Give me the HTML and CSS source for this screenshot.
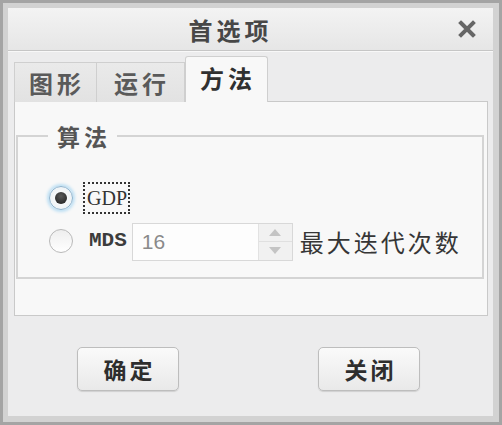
FILE: index.html
```html
<!DOCTYPE html>
<html lang="zh-CN">
<head>
<meta charset="utf-8">
<title>首选项</title>
<link rel="stylesheet" href="styles.css">
</head>
<body>
<div class="window">
  <div class="titlebar">
    <span></span>
    <span class="title">首选项</span>
    <span class="close">
      <svg width="18" height="18" viewBox="0 0 18 18"><path d="M3 3 L15 15 M15 3 L3 15" stroke="#666" stroke-width="4" stroke-linecap="square"/></svg>
    </span>
  </div>
  <div class="body">
    <div class="tabs">
      <div class="tab">图形</div>
      <div class="tab">运行</div>
      <div class="tab active">方法</div>
    </div>
    <div class="panel">
      <fieldset class="group">
        <legend>算法</legend>
        <div class="row">
          <span class="radio checked"><span class="dot"></span></span>
          <span class="opt focus">GDP</span>
        </div>
        <div class="row">
          <span class="radio"></span>
          <span class="opt mds">MDS</span>
          <span class="spin">
            <span class="spin-val">16</span>
            <span class="spin-btns">
              <span class="arr up"></span>
              <span class="arr down"></span>
            </span>
          </span>
          <span class="label">最大迭代次数</span>
        </div>
      </fieldset>
    </div>
    <div class="footer">
      <button class="btn">确定</button>
      <button class="btn">关闭</button>
    </div>
  </div>
</div>
</body>
</html>
```

FILE: styles.css
```css
html, body {
  margin: 0;
  padding: 0;
  background: #cdcdcd;
}
.window {
  box-sizing: border-box;
  width: 502px;
  height: 425px;
  border: 3px solid #a4a4a4;
  background: #d2d2d2;
  padding: 5px 6px 6px 5px;
  display: flex;
  flex-direction: column;
  font-family: "Noto Sans CJK SC", sans-serif;
}
.titlebar {
  height: 42px;
  flex: none;
  display: grid;
  grid-template-columns: 1fr auto 1fr;
  align-items: center;
  background: linear-gradient(#f3f3f3, #e6e6e6);
  border-bottom: 1px solid #c6c6c6;
}
.title {
  font-size: 24px;
  font-weight: bold;
  letter-spacing: 4px;
  color: #474747;
  padding-right: 40px;
}
.close {
  justify-self: end;
  margin-right: 17px;
  display: flex;
}
.body {
  flex: 1;
  background: #ececed;
  border-top: 1px solid #f8f8f8;
  display: flex;
  flex-direction: column;
  padding: 5px 5px 0 6px;
}
.tabs {
  display: flex;
  align-items: flex-end;
  height: 45px;
  position: relative;
  z-index: 1;
  margin-bottom: -1px;
}
.tab {
  box-sizing: border-box;
  height: 40px;
  width: 83px;
  border: 1px solid #cfcfcf;
  border-bottom: none;
  background: linear-gradient(#eaeaea, #e2e2e2);
  font-size: 24px;
  font-weight: bold;
  letter-spacing: 4px;
  color: #5a5a5a;
  display: flex;
  align-items: center;
  justify-content: center;
  padding-left: 3px;
}
.tab + .tab {
  border-left: none;
  width: 88px;
}
.tab.active {
  height: 46px;
  width: 83px;
  background: #f8f8f8;
  color: #303030;
  border-left: 1px solid #cfcfcf;
  border-radius: 3px 3px 0 0;
  padding-bottom: 4px;
}
.panel {
  box-sizing: border-box;
  height: 215px;
  background: #f8f8f8;
  border: 1px solid #c9c9c9;
  padding: 20px 3px 0 1px;
}
.group {
  margin: 0;
  height: 157px;
  box-sizing: border-box;
  border: 2px solid #d4d4d4;
  padding: 26px 0 0 30px;
}
.group legend {
  font-size: 23px;
  font-weight: bold;
  letter-spacing: 4px;
  color: #555;
  padding: 0 6px 0 9px;
  line-height: 28px;
}
.row {
  display: flex;
  align-items: center;
  height: 43px;
}
.radio {
  box-sizing: border-box;
  width: 24px;
  height: 24px;
  border-radius: 50%;
  border: 1px solid #b9b9b9;
  background: linear-gradient(#eeeeee, #ffffff);
  display: flex;
  align-items: center;
  justify-content: center;
  margin-left: 1px;
  margin-right: 13px;
}
.radio.checked {
  border-color: #8fb4cf;
  box-shadow: 0 0 3px 2px #bfe0f4;
  background: radial-gradient(#ffffff, #e8eef2);
}
.dot {
  width: 12px;
  height: 12px;
  border-radius: 50%;
  background: radial-gradient(circle at 50% 35%, #5a5a5a, #1c1c1c);
}
.opt {
  font-family: "Liberation Serif", serif;
  font-size: 20px;
  color: #333;
  line-height: 28px;
}
.opt.focus {
  outline: 2px dotted #333;
  outline-offset: -1px;
  padding: 1px 2px 1px 3px;
  margin-left: -2px;
}
.opt.mds {
  font-family: "Liberation Mono", monospace;
  font-size: 21px;
  font-weight: bold;
  color: #3c3c3c;
  margin-left: 3px;
  margin-right: 5px;
}
.spin {
  box-sizing: border-box;
  display: flex;
  width: 161px;
  height: 38px;
  border: 1px solid #d8d8d8;
  margin-top: 2px;
}
.spin-val {
  flex: 1;
  background: #fdfdfd;
  font-family: "Liberation Sans", sans-serif;
  font-size: 21px;
  color: #8a8a8a;
  display: flex;
  align-items: center;
  padding-left: 9px;
  border-right: 1px solid #e2e2e2;
}
.spin-btns {
  width: 33px;
  display: flex;
  flex-direction: column;
  background: #f1f1f1;
}
.arr {
  flex: 1;
  display: flex;
  align-items: center;
  justify-content: center;
}
.arr.up {
  border-bottom: 1px solid #e0e0e0;
}
.arr::before {
  content: "";
  border-left: 6px solid transparent;
  border-right: 6px solid transparent;
}
.arr.up::before {
  border-bottom: 7px solid #c4c4c4;
}
.arr.down::before {
  border-top: 7px solid #c4c4c4;
}
.label {
  font-size: 24px;
  letter-spacing: 3px;
  color: #363636;
  margin-left: 7px;
  margin-top: 2px;
}
.footer {
  flex: 1;
  display: flex;
  align-items: center;
  padding-left: 63px;
  gap: 139px;
  padding-top: 6px;
}
.btn {
  box-sizing: border-box;
  width: 102px;
  height: 44px;
  border: 1px solid #bdbdbd;
  border-radius: 5px;
  background: linear-gradient(#fafafa, #e9e9e9);
  box-shadow: 0 1px 1px #d0d0d0;
  font-family: "Noto Sans CJK SC", sans-serif;
  font-size: 23px;
  font-weight: bold;
  letter-spacing: 3px;
  color: #2e2e2e;
  padding: 0 0 0 3px;
}
```
